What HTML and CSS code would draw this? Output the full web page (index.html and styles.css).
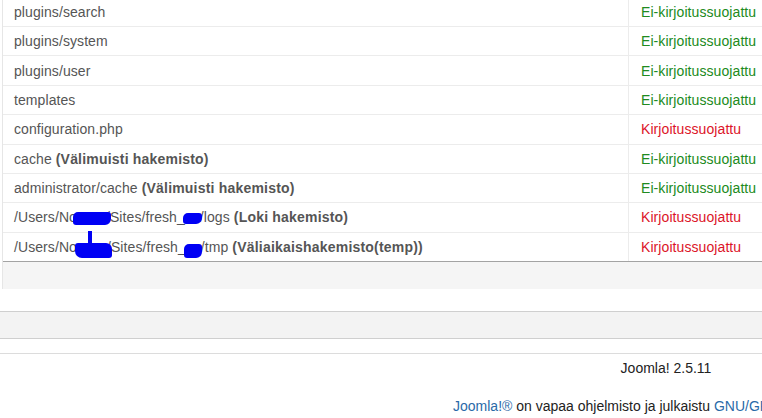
FILE: index.html
```html
<!DOCTYPE html>
<html lang="fi">
<head>
<meta charset="utf-8">
<title>Järjestelmätiedot</title>
<link rel="stylesheet" href="styles.css">
</head>
<body>
<div class="page">
  <div class="sysinfo">
    <div class="row"><div class="cell path">plugins/search</div><div class="cell status ok">Ei-kirjoitussuojattu</div></div>
    <div class="row"><div class="cell path">plugins/system</div><div class="cell status ok">Ei-kirjoitussuojattu</div></div>
    <div class="row"><div class="cell path">plugins/user</div><div class="cell status ok">Ei-kirjoitussuojattu</div></div>
    <div class="row"><div class="cell path">templates</div><div class="cell status ok">Ei-kirjoitussuojattu</div></div>
    <div class="row"><div class="cell path">configuration.php</div><div class="cell status bad">Kirjoitussuojattu</div></div>
    <div class="row"><div class="cell path">cache&nbsp;<strong>(Välimuisti hakemisto)</strong></div><div class="cell status ok">Ei-kirjoitussuojattu</div></div>
    <div class="row"><div class="cell path">administrator/cache&nbsp;<strong>(Välimuisti hakemisto)</strong></div><div class="cell status ok">Ei-kirjoitussuojattu</div></div>
    <div class="row"><div class="cell path">/Users/No<span class="redact r-a"></span>/Sites/fresh_<span class="redact r-b"></span>/logs&nbsp;<strong>(Loki hakemisto)</strong></div><div class="cell status bad">Kirjoitussuojattu</div></div>
    <div class="row last"><div class="cell path">/Users/No<span class="redact r-c"><span class="stroke"></span></span>/Sites/fresh_<span class="redact r-d"></span>/tmp&nbsp;<strong>(Väliaikaishakemisto(temp))</strong></div><div class="cell status bad">Kirjoitussuojattu</div></div>
    <div class="tfoot"></div>
  </div>
  <div class="bar"></div>
  <footer class="footer">
    <p class="version">Joomla! 2.5.11</p>
    <p class="copyright"><a href="#">Joomla!®</a> on vapaa ohjelmisto ja julkaistu <a href="#">GNU/GPL</a>-lisenssillä.</p>
  </footer>
</div>
</body>
</html>
```
FILE: styles.css
```css
html, body {
  margin: 0;
  padding: 0;
  background: #fff;
}

body {
  overflow: hidden;
  font-family: "Liberation Sans", Arial, sans-serif;
  font-size: 14px;
  color: #555;
}

.page {
  width: 1332px;
  margin-top: -2.375px;
}

.sysinfo {
  margin-left: 2px;
  border-left: 1px solid #e6e6e6;
}

.row {
  display: grid;
  grid-template-columns: 626px 1fr;
  height: 29.375px;
  box-sizing: border-box;
  border-bottom: 1px solid #ececec;
}

.row.last {
  border-bottom-color: #a3a3a3;
}

.cell {
  display: flex;
  align-items: center;
  white-space: nowrap;
}

.path {
  padding-left: 11px;
  border-right: 1px solid #ececec;
  letter-spacing: 0.08px;
}

.status {
  padding-left: 12px;
  letter-spacing: 0.08px;
}

.ok {
  color: #208a20;
}

.bad {
  color: #dc1428;
}

strong {
  font-weight: bold;
  color: #555;
  letter-spacing: 0.2px;
}

.redact {
  display: inline-block;
  position: relative;
  background: #0000f4;
  height: 13px;
  border-radius: 5px 3px 6px 3px;
}

.r-a {
  width: 38px;
  margin-left: -4px;
  margin-right: -5px;
  top: 1px;
}

.r-b {
  width: 19px;
  margin-right: -2px;
  margin-left: -2px;
  height: 11px;
  top: 1px;
}

.r-c {
  width: 37px;
  margin-left: -2px;
  margin-right: -5px;
  height: 15px;
  top: 4px;
  border-radius: 3px 6px 3px 7px;
}

.r-d {
  width: 18px;
  margin-left: -2px;
  margin-right: -1px;
  height: 14px;
  top: 4px;
}

.stroke {
  position: absolute;
  left: 13px;
  top: -12px;
  width: 4px;
  height: 14px;
  background: #0000f4;
}

.tfoot {
  height: 27px;
  background: #f5f5f5;
}

.bar {
  margin-top: 22px;
  height: 26px;
  background: #f3f3f3;
  border-top: 1px solid #cfcfcf;
  border-bottom: 1px solid #cfcfcf;
}

.footer {
  margin-top: 14px;
  border-top: 1px solid #dcdcdc;
  color: #222;
}

.version {
  margin: 0;
  padding-top: 4px;
  line-height: 20px;
  text-align: center;
}

.copyright {
  margin: 18px 0 0 453px;
  line-height: 20px;
  white-space: nowrap;
}

.copyright a {
  color: #2a6aa8;
  text-decoration: none;
}
```
